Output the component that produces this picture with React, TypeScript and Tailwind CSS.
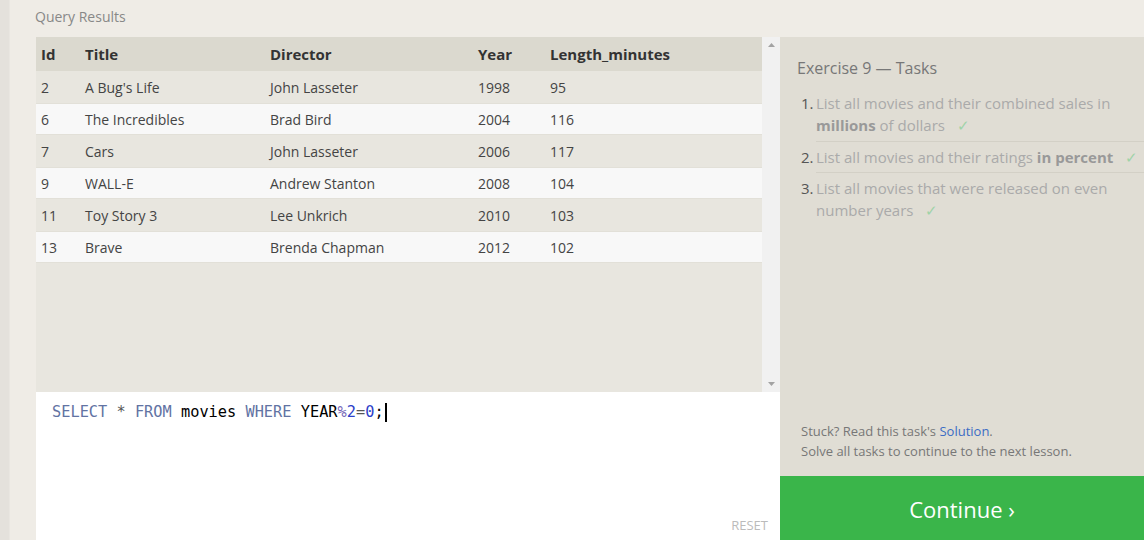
import React from "react";

const rows = [
  ["2", "A Bug's Life", "John Lasseter", "1998", "95"],
  ["6", "The Incredibles", "Brad Bird", "2004", "116"],
  ["7", "Cars", "John Lasseter", "2006", "117"],
  ["9", "WALL-E", "Andrew Stanton", "2008", "104"],
  ["11", "Toy Story 3", "Lee Unkrich", "2010", "103"],
  ["13", "Brave", "Brenda Chapman", "2012", "102"],
];

function Check() {
  return <span className="ml-3 leading-[20px] text-[#9fd3a8]">✓</span>;
}

export default function App() {
  return (
    <div
      className="flex h-[540px] w-[1144px] overflow-hidden bg-[#efece6]"
      style={{ fontFamily: "'Open Sans', 'Noto Sans', sans-serif" }}
    >
      <div className="w-[10px] shrink-0 border-r border-[#e9e6e1] bg-[#e4e1dc]" />
      <div className="flex flex-1 flex-col">
        <div className="h-[37px] pl-[25px] pt-[6px] text-[14px] text-[#888]">Query Results</div>
        <div className="flex flex-1">
          <div className="ml-[26px] flex w-[744px] flex-col">
            <div className="flex h-[355px]">
              <div className="flex w-[726px] flex-col bg-[#e8e6df] text-[14px] text-[#444]">
                <div className="flex h-[34px] items-center bg-[#dbd9cf] text-[15px] font-bold text-[#333]">
                  <div className="w-[49px] pl-[5px]">Id</div>
                  <div className="w-[185px]">Title</div>
                  <div className="w-[208px]">Director</div>
                  <div className="w-[72px]">Year</div>
                  <div>Length_minutes</div>
                </div>
                {rows.map((r, i) => (
                  <div
                    key={i}
                    className={
                      "flex h-[32px] items-center " +
                      (i % 2 === 1 ? "bg-[#f8f8f8] border-y border-[#e2e0d8]" : "")
                    }
                  >
                    <div className="w-[49px] pl-[5px]">{r[0]}</div>
                    <div className="w-[185px]">{r[1]}</div>
                    <div className="w-[208px]">{r[2]}</div>
                    <div className="w-[72px]">{r[3]}</div>
                    <div>{r[4]}</div>
                  </div>
                ))}
              </div>
              <div className="flex w-[18px] flex-col items-center justify-between bg-[#f1f1f1] py-[6px]">
                <svg width="7" height="4" viewBox="0 0 7 4"><path d="M0 4 L3.5 0 L7 4Z" fill="#a3a3a3" /></svg>
                <svg width="7" height="4" viewBox="0 0 7 4"><path d="M0 0 L3.5 4 L7 0Z" fill="#a3a3a3" /></svg>
              </div>
            </div>
            <div className="relative flex-1 bg-white">
              <div
                className="pl-[16px] pt-[10px] text-[15.3px] leading-[20px]"
                style={{ fontFamily: "'DejaVu Sans Mono', 'Liberation Mono', monospace" }}
              >
                <span className="text-[#6273a3]">SELECT</span>
                <span className="text-[#555]"> * </span>
                <span className="text-[#6273a3]">FROM</span>
                <span className="text-black"> movies </span>
                <span className="text-[#6273a3]">WHERE</span>
                <span className="text-black"> YEAR</span>
                <span className="text-[#7768b8]">%</span>
                <span className="text-[#2d3fc9]">2</span>
                <span className="text-[#555]">=</span>
                <span className="text-[#2d3fc9]">0</span>
                <span className="text-black">;</span>
                <span className="ml-[1px] inline-block h-[19px] w-[2px] bg-black align-middle" />
              </div>
              <div className="absolute bottom-[5px] right-[12px] text-[13px] text-[#bbb]">RESET</div>
            </div>
          </div>
          <div className="flex w-[364px] flex-col bg-[#e0ddd4]">
            <div className="flex-1 pl-[17px] pt-[19px]">
              <div className="text-[16px] text-[#777]">Exercise 9 — Tasks</div>
              <ol className="mt-[12px] text-[15px] leading-[22px] text-[#aaa]">
                <li className="flex pl-[4px]">
                  <span className="w-[15px] text-[#555]">1.</span>
                  <div className="flex-1 border-b border-[#d3d0c6] pb-[5px]">
                    List all movies and their combined sales in <b className="text-[#999]">millions</b> of dollars
                    <Check />
                  </div>
                </li>
                <li className="flex pl-[4px] pt-[4px]">
                  <span className="w-[15px] text-[#555]">2.</span>
                  <div className="flex-1 border-b border-[#d3d0c6] pb-[4px]">
                    List all movies and their ratings <b className="text-[#999]">in percent</b>
                    <Check />
                  </div>
                </li>
                <li className="flex pl-[4px] pt-[4px]">
                  <span className="w-[15px] text-[#555]">3.</span>
                  <div className="flex-1">
                    List all movies that were released on even number years
                    <Check />
                  </div>
                </li>
              </ol>
            </div>
            <div className="pb-[15px] pl-[21px] text-[13px] leading-[20px] text-[#777]">
              <div>
                Stuck? Read this task's <span className="text-[#3b6cc4]">Solution</span>.
              </div>
              <div>Solve all tasks to continue to the next lesson.</div>
            </div>
            <div className="flex h-[64px] items-center justify-center bg-[#3ab54a] pt-[2px] text-[22px] text-white">
              Continue ›
            </div>
          </div>
        </div>
      </div>
    </div>
  );
}
